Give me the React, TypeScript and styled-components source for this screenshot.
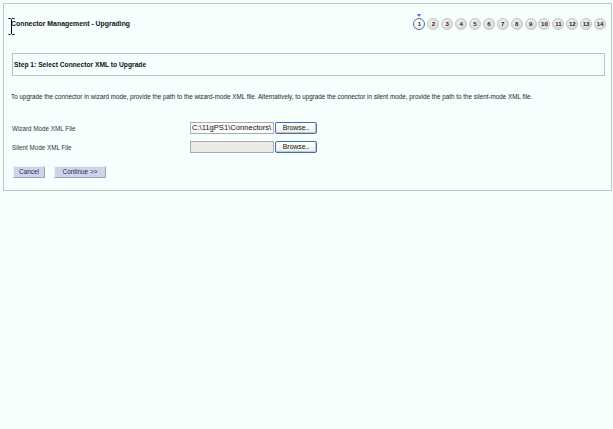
import React from "react";
import styled, { createGlobalStyle } from "styled-components";

const GlobalStyles = createGlobalStyle`
  html, body {
    margin: 0;
    padding: 0;
    background: #f6fffe;
    font-family: "Liberation Sans", Arial, sans-serif;
    color: #1a1a1a;
  }
`;

const STEPS = Array.from({ length: 14 }, (_, i) => i + 1);

const Page = styled.div`
  position: relative;
  padding: 3px 1px 0 3px;
`;

const Panel = styled.div`
  height: 186px;
  border: 1px solid #c2c4c4;
  background: #f6fffe;
`;

const Header = styled.div`
  height: 38px;
  display: flex;
  align-items: center;
  justify-content: space-between;
  padding: 0 5px 0 7px;
`;

const Title = styled.div`
  font-size: 6.9px;
  font-weight: bold;
  color: #111;
`;

const Steps = styled.div`
  display: flex;
  gap: 1.9px;
  margin-top: 2px;
`;

const StepDot = styled.div<{ $current?: boolean }>`
  position: relative;
  width: 12px;
  height: 12px;
  box-sizing: border-box;
  border-radius: 50%;
  display: flex;
  align-items: center;
  justify-content: center;
  font-size: 6px;
  font-weight: bold;
  color: #222;
  background: ${({ $current }) =>
    $current
      ? "radial-gradient(circle at 40% 35%, #ffffff, #e4e8ee)"
      : "radial-gradient(circle at 40% 35%, #f2f2f2, #cfcfcf)"};
  border: 1px solid ${({ $current }) => ($current ? "#5b6f9c" : "#c6c6c6")};
`;

const Marker = styled.div`
  position: absolute;
  top: -5px;
  left: 50%;
  margin-left: -2.5px;
  width: 0;
  height: 0;
  border-left: 2.5px solid transparent;
  border-right: 2.5px solid transparent;
  border-top: 3px solid #4c6ad8;
`;

const StepBox = styled.div`
  margin: 11px 6px 0 8px;
  height: 21px;
  border: 1px solid #bfc2c2;
  display: flex;
  align-items: center;
  padding-left: 1px;
  font-size: 6.7px;
  font-weight: bold;
  color: #111;
`;

const Intro = styled.p`
  margin: 17px 0 0 7px;
  font-size: 6.3px;
  line-height: 8px;
  color: #222;
`;

const Form = styled.div`
  margin: 21px 0 0 8px;
  display: grid;
  grid-template-columns: 178px auto;
  row-gap: 7px;
  align-items: center;
`;

const Label = styled.div`
  font-size: 6.3px;
  color: #333;
`;

const FileField = styled.div`
  display: flex;
  align-items: center;
  gap: 1px;
`;

const PathInput = styled.div<{ $disabled?: boolean }>`
  width: 84px;
  height: 12px;
  box-sizing: border-box;
  border: 1px solid #a8acb0;
  background: ${({ $disabled }) => ($disabled ? "#eceae4" : "#fbfbfb")};
  font-size: 7.6px;
  line-height: 10px;
  padding-left: 1px;
  overflow: hidden;
  white-space: nowrap;
  color: #111;
`;

const BrowseButton = styled.div`
  width: 42px;
  height: 12px;
  box-sizing: border-box;
  border: 1px solid #3f6fb0;
  border-radius: 2px;
  background: linear-gradient(#ffffff, #ebebe6);
  box-shadow: inset -1px -1px 0 #c9c8c0;
  font-size: 6.8px;
  line-height: 10px;
  text-align: center;
  color: #111;
`;

const Actions = styled.div`
  margin: 13px 0 0 9px;
  display: flex;
  gap: 9px;
`;

const ActionButton = styled.div<{ $width: number }>`
  width: ${({ $width }) => $width}px;
  height: 12px;
  box-sizing: border-box;
  background: #cdd5ea;
  border: 1px solid;
  border-color: #eef1f8 #9aa2b8 #9aa2b8 #eef1f8;
  font-size: 6.4px;
  line-height: 10px;
  text-align: center;
  color: #1c2a52;
`;

const Cursor = styled.svg`
  position: absolute;
  left: 8px;
  top: 18px;
`;

export default function App() {
  return (
    <>
      <GlobalStyles />
      <Page>
        <Panel>
          <Header>
            <Title>Connector Management - Upgrading</Title>
            <Steps>
              {STEPS.map((n) => (
                <StepDot key={n} $current={n === 1}>
                  {n === 1 && <Marker />}
                  {n}
                </StepDot>
              ))}
            </Steps>
          </Header>

          <StepBox>Step 1: Select Connector XML to Upgrade</StepBox>

          <Intro>
            To upgrade the connector in wizard mode, provide the path to the wizard-mode XML file.
            Alternatively, to upgrade the connector in silent mode, provide the path to the
            silent-mode XML file.
          </Intro>

          <Form>
            <Label>Wizard Mode XML File</Label>
            <FileField>
              <PathInput>C:\11gPS1\Connectors\</PathInput>
              <BrowseButton>Browse..</BrowseButton>
            </FileField>
            <Label>Silent Mode XML File</Label>
            <FileField>
              <PathInput $disabled />
              <BrowseButton>Browse..</BrowseButton>
            </FileField>
          </Form>

          <Actions>
            <ActionButton $width={32}>Cancel</ActionButton>
            <ActionButton $width={52}>Continue &gt;&gt;</ActionButton>
          </Actions>
        </Panel>

        <Cursor width="7" height="17" viewBox="0 0 7 17">
          <path
            d="M0.5 0.5H2.5L3.5 1.5L4.5 0.5H6.5M3.5 1.5V15.5M0.5 16.5H2.5L3.5 15.5L4.5 16.5H6.5"
            fill="none"
            stroke="#000"
            strokeWidth="1"
          />
        </Cursor>
      </Page>
    </>
  );
}
